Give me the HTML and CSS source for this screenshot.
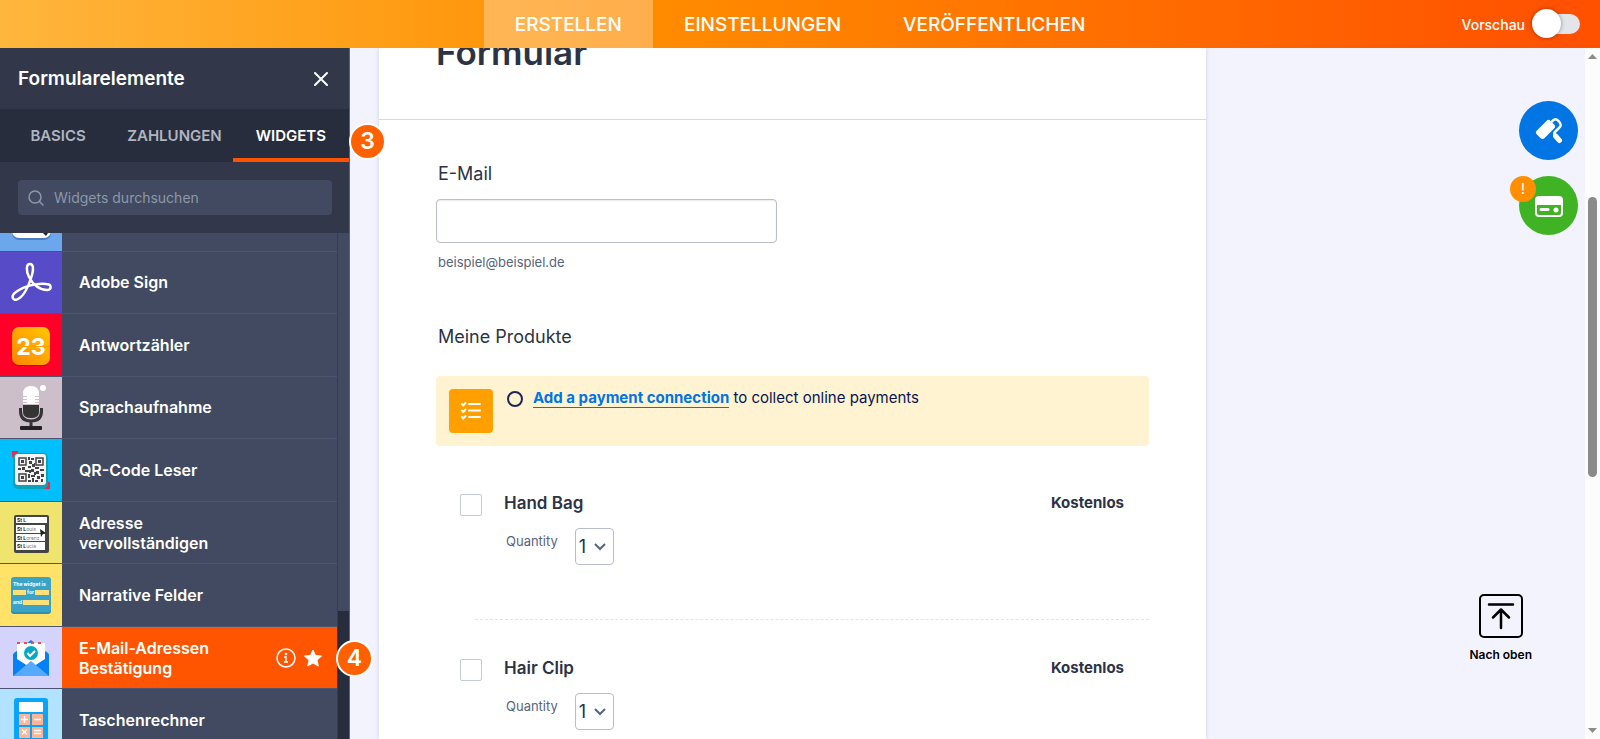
FILE: index.html
```html
<!DOCTYPE html>
<html lang="de">
<head>
  <meta charset="UTF-8" />
  <meta name="viewport" content="width=device-width, initial-scale=1.0"/>
  <title>Formular erstellen</title>
  <link rel="stylesheet" href="styles.css">
</head>
<body>
  <header class="topbar">
    <nav class="topnav">
      <a href="#" class="active">ERSTELLEN</a>
      <a href="#">EINSTELLUNGEN</a>
      <a href="#">VERÖFFENTLICHEN</a>
    </nav>
    <label class="preview" for="preview">
      Vorschau
      <input type="checkbox" id="preview" class="toggle">
    </label>
  </header>

  <div class="layout">
    <aside class="sidebar">
      <div class="sidebar-head">
        <h2>Formularelemente</h2>
        <button type="button" class="close" aria-label="Schließen">
          <svg width="14" height="14" viewBox="0 0 14 14" fill="none" stroke="#fff" stroke-width="2" stroke-linecap="round"><path d="M1 1l12 12M13 1L1 13"/></svg>
        </button>
      </div>

      <div class="tabs">
        <button type="button">BASICS</button>
        <button type="button">ZAHLUNGEN</button>
        <button type="button" class="active">WIDGETS</button>
      </div>

      <div class="search">
        <label class="search-box" for="search">
          <svg width="16" height="16" viewBox="0 0 16 16" fill="none" stroke="#8d98aa" stroke-width="1.5" stroke-linecap="round"><circle cx="7" cy="7" r="6"/><path d="M11.5 11.5L15 15"/></svg>
          <input type="text" id="search" placeholder="Widgets durchsuchen">
        </label>
      </div>

      <div class="widgets">
        <ul class="widget-list">
          <li>
            <span class="icon blue">
              <svg width="62" height="62" viewBox="0 0 62 62"><rect x="12" y="12" width="39" height="39" rx="7" fill="#4a7fc4"/><rect x="12" y="11" width="39" height="38" rx="7" fill="#fff"/><path d="M43 44l5 0-2 3z" fill="#222"/></svg>
            </span>
            <span class="name"></span>
          </li>
          <li>
            <span class="icon violet">
              <svg width="62" height="62" viewBox="0 0 62 62" fill="none" stroke="#fff" stroke-width="2.5" stroke-linejoin="round"><path d="M30 13C26 13 26 20 29 26C33 34 40 39 47 39C52 39 52 33 46 33C37 32 24 35 16 41C10 45 13 51 18 48C24 45 29 34 32 24C34 17 33 13 30 13Z"/></svg>
            </span>
            <span class="name">Adobe Sign</span>
          </li>
          <li>
            <span class="icon red">
              <svg width="62" height="62" viewBox="0 0 62 62">
                <defs><linearGradient id="counter" x1="0" y1="1" x2="1" y2="0"><stop offset="0" stop-color="#ff8400"/><stop offset="1" stop-color="#ffc800"/></linearGradient></defs>
                <rect x="12" y="14" width="38" height="38" rx="7" fill="#c80026"/>
                <rect x="12" y="13" width="38" height="38" rx="7" fill="url(#counter)"/>
                <text x="31" y="41" class="count">23</text>
                <path d="M12 32.5h38" stroke="#ff9e00"/>
              </svg>
            </span>
            <span class="name">Antwortzähler</span>
          </li>
          <li>
            <span class="icon mauve">
              <svg width="62" height="62" viewBox="0 0 62 62">
                <circle cx="43" cy="12" r="3" fill="#fff"/>
                <path d="M23 18q0-8 8-8t8 8v10H23z" fill="#fff"/>
                <path d="M23 20.5h4M23 23.5h4M23 26.5h4M35 20.5h4M35 23.5h4M35 26.5h4" stroke="#ccbfca"/>
                <path d="M23 29h16v7q0 6-8 6t-8-6z" fill="#343434"/>
                <path d="M20.5 32v3q0 10 10.5 10t10.5-10v-3M31 45v8" fill="none" stroke="#343434" stroke-width="3"/>
                <rect x="20" y="50" width="22" height="4" rx="1" fill="#222"/>
              </svg>
            </span>
            <span class="name">Sprachaufnahme</span>
          </li>
          <li>
            <span class="icon cyan">
              <svg width="62" height="62" viewBox="0 0 62 62">
                <path d="M12 12h6v3h-3v3h-3zM50 50h-6v-3h3v-4h3z" fill="#f5244f"/>
                <rect x="13" y="14" width="35" height="36" rx="5" fill="#08a3b9"/>
                <rect x="15" y="15" width="31" height="31" rx="3" fill="#f4f4f4"/>
                <g fill="none" stroke="#444" stroke-width="1.5"><rect x="19" y="19" width="7" height="7"/><rect x="36" y="19" width="7" height="7"/><rect x="19" y="35" width="7" height="7"/></g>
                <path fill="#444" d="M21 21h3v3h-3zM38 21h3v3h-3zM21 37h3v3h-3zM28 18h2v3h-2zM31 19h3v2h-3zM29 22h3v3h-3zM32 25h2v3h-2zM28 27h3v2h-3zM18 29h3v2h-3zM22 28h3v3h-3zM25 31h4v2h-4zM31 30h3v3h-3zM35 28h4v2h-4zM40 30h4v2h-4zM36 32h3v3h-3zM28 35h2v4h-2zM31 36h4v2h-4zM37 37h3v3h-3zM41 35h3v3h-3zM32 39h2v4h-2zM28 41h3v2h-3zM35 41h3v2h-3zM41 40h2v3h-2zM29 31h2v3h-2zM34 24h1v4h-1zM34 33h2v3h-2z"/>
              </svg>
            </span>
            <span class="name">QR-Code Leser</span>
          </li>
          <li>
            <span class="icon khaki">
              <svg width="62" height="62" viewBox="0 0 62 62">
                <rect x="14" y="13" width="35" height="38" rx="2" fill="#444"/>
                <path d="M16 15h31v6H16zM16 23h29v8H16zM16 32h29v7H16zM16 40h29v8H16z" fill="#fff"/>
                <g class="tiny"><text x="17" y="20">St L</text><text x="17" y="29">St L<tspan>ouis</tspan></text><text x="17" y="38">St L<tspan>orenz</tspan></text><text x="17" y="46">St L<tspan>ucia</tspan></text></g>
                <path d="M40 27l6 4-3 1-2 3z" fill="#222"/>
              </svg>
            </span>
            <span class="name">Adresse vervollständigen</span>
          </li>
          <li>
            <span class="icon yellow">
              <svg width="62" height="62" viewBox="0 0 62 62">
                <rect x="11" y="14" width="40" height="36" rx="3" fill="#2f8fb4"/>
                <rect x="11" y="13" width="40" height="35" rx="3" fill="#3ca3c8"/>
                <path d="M13 26h13v5H13zM35 26h14v5H35zM23 36h26v5H23z" fill="#ffe078"/>
                <g class="tiny light"><text x="13" y="22">The widget is</text><text x="27" y="30">for</text><text x="13" y="40">and</text></g>
              </svg>
            </span>
            <span class="name">Narrative Felder</span>
          </li>
          <li class="selected">
            <span class="icon lavender">
              <svg width="62" height="62" viewBox="0 0 62 62">
                <path d="M13 28q0-2 4-4h28q4 2 4 4v21H13z" fill="#0580f5"/>
                <path d="M26 17l5-4 5 4z" fill="#0580f5"/>
                <path d="M17 16h28v16l-14 9-14-9z" fill="#fff"/>
                <path d="M17 16h28" stroke="#f04950" stroke-width="2" stroke-dasharray="3 4"/>
                <path d="M13 49l18-15 18 15z" fill="#55aaff"/>
                <circle cx="31" cy="26" r="7" fill="#08a8c5"/>
                <path d="M27.5 26l2.500 3 5-5" fill="none" stroke="#fff" stroke-width="2"/>
              </svg>
            </span>
            <span class="name">E-Mail-Adressen Bestätigung</span>
            <span class="actions">
              <svg width="20" height="20" viewBox="0 0 20 20" fill="none" stroke="#fff" stroke-width="1.5"><circle cx="10" cy="10" r="9"/><path d="M8 9h2v5M8 14h4"/><circle cx="10" cy="6" r=".6" fill="#fff"/></svg>
              <svg width="20" height="20" viewBox="0 0 20 20"><path fill="#fff" stroke="#fff" stroke-linejoin="round" d="M10 2l2.500 5.500 6 .6-4.500 4 1.300 6L10 15l-5.300 3.100 1.300-6-4.500-4 6-.6z"/></svg>
            </span>
          </li>
          <li>
            <span class="icon sky">
              <svg width="62" height="62" viewBox="0 0 62 62">
                <rect x="14" y="9" width="34" height="50" rx="3" fill="#0aa5fa"/>
                <rect x="19" y="13" width="24" height="10" rx="1" fill="#fff"/>
                <path d="M19 25h11v11H19zM32 25h11v11H32zM19 38h11v11H19zM32 38h11v11H32z" fill="#ffb493"/>
                <path d="M21 30.5h7M24.5 27v7M34 30.5h7M22 40.5l5 5M27 40.5l-5 5M34 41.5h7M34 44.5h7" stroke="#fff" stroke-width="1.5"/>
              </svg>
            </span>
            <span class="name">Taschenrechner</span>
          </li>
        </ul>
        <div class="side-scroll"><span></span></div>
      </div>
      <span class="step step-3">3</span>
      <span class="step step-4">4</span>
    </aside>

    <main class="stage">
      <form class="form-card">
        <div class="form-header"><h1>Formular</h1></div>

        <div class="field">
          <label class="field-label" for="email">E-Mail</label>
          <input type="email" id="email" class="email">
          <span class="hint">beispiel@beispiel.de</span>
        </div>

        <div class="products">
          <span class="field-label">Meine Produkte</span>
          <div class="notice">
            <span class="notice-icon">
              <svg width="22" height="20" viewBox="0 0 22 20" fill="none" stroke="#fff" stroke-width="2" stroke-linecap="round"><path d="M9 3h11M9 9.5h11M9 16h11M2 3l1.200 1.500L5.500 2M2 9.500L3.200 11l2.300-2.500M2 16l1.200 1.500L5.500 15"/></svg>
            </span>
            <span class="ring"></span>
            <p><a href="#">Add a payment connection</a> to collect online payments</p>
          </div>

          <div class="product">
            <input type="checkbox" id="bag">
            <div class="product-info">
              <label class="product-name" for="bag">Hand Bag</label>
              <div class="quantity">
                <label for="bagQty">Quantity</label>
                <span class="select-wrap">
                  <select id="bagQty"><option>1</option><option>2</option></select>
                  <svg width="12" height="8" viewBox="0 0 12 8" fill="none" stroke="#57647e" stroke-width="2"><path d="M1 1l5 5 5-5"/></svg>
                </span>
              </div>
            </div>
            <span class="price">Kostenlos</span>
          </div>

          <div class="product">
            <input type="checkbox" id="clip">
            <div class="product-info">
              <label class="product-name" for="clip">Hair Clip</label>
              <div class="quantity">
                <label for="clipQty">Quantity</label>
                <span class="select-wrap">
                  <select id="clipQty"><option>1</option><option>2</option></select>
                  <svg width="12" height="8" viewBox="0 0 12 8" fill="none" stroke="#57647e" stroke-width="2"><path d="M1 1l5 5 5-5"/></svg>
                </span>
              </div>
            </div>
            <span class="price">Kostenlos</span>
          </div>
        </div>
      </form>

      <div class="tools">
        <div class="tool-buttons">
          <button type="button" class="round designer" aria-label="Designer">
            <svg width="28" height="28" viewBox="0 0 28 28" fill="none" stroke="#fff" stroke-linecap="round" stroke-linejoin="round"><path d="M4 15.500L13.500 6l3.500 3.500L7.500 19z" fill="#fff" stroke-width="6"/><path d="M17 4.500C19 1.500 22 1.500 24 4.500C27 8 26 9 23 12C20 15 18 15.500 20 19" stroke-width="2.500"/><path d="M20.500 19l4 4.500" stroke-width="5"/></svg>
          </button>
          <button type="button" class="round payment" aria-label="Zahlung">
            <svg width="30" height="22" viewBox="0 0 30 22"><rect x="2" y="2" width="26" height="19" rx="3" fill="none" stroke="#fff" stroke-width="2"/><path d="M2 2h26v8H2z" fill="#fff"/><path d="M7 14.500h7" stroke="#fff" stroke-width="3" stroke-linecap="round"/><circle cx="22" cy="15" r="2.500" fill="#fff"/></svg>
            <span class="alert">!</span>
          </button>
        </div>
        <button type="button" class="to-top">
          <svg width="44" height="44" viewBox="0 0 44 44" fill="none" stroke="#000" stroke-width="2" stroke-linecap="round" stroke-linejoin="round"><rect x="1" y="1" width="42" height="42" rx="4"/><path d="M10 10.500h24M22 34V15.500M14 23.500l8-8 8 8" stroke-width="2.500"/></svg>
          Nach oben
        </button>
      </div>
    </main>

    <div class="page-scroll">
      <svg width="9" height="5" viewBox="0 0 9 5"><path d="M0 5l4.500-5L9 5z" fill="#8b8b8b"/></svg>
      <span></span>
      <svg width="9" height="5" viewBox="0 0 9 5"><path d="M0 0l4.500 5L9 0z" fill="#8b8b8b"/></svg>
    </div>
  </div>
</body>
</html>
```
FILE: styles.css
```css
* { box-sizing: border-box; }
body {
  margin: 0;
  height: 100vh;
  display: flex;
  flex-direction: column;
  overflow: hidden;
  font-family: Inter, "Liberation Sans", sans-serif;
  color: #2c3345;
}
button {
  font-family: inherit;
  border: none;
  background: transparent;
  padding: 0;
  cursor: pointer;
}
svg { display: block; flex: none; }
h1, h2, p, ul { margin: 0; padding: 0; }

/* top bar */
.topbar {
  position: relative;
  z-index: 2;
  display: grid;
  grid-template-columns: 1fr auto 1fr;
  height: 48px;
  flex: none;
  background: linear-gradient(90deg, #ffb63d, #ff8f00 38%, #ff5100 98%);
  color: #fff;
}
.topnav {
  grid-column: 2;
  display: flex;
}
.topnav a {
  display: flex;
  align-items: center;
  padding: 0 31px;
  color: #fff;
  font-size: 19px;
  font-weight: 500;
  text-decoration: none;
}
.topnav a.active { background: rgba(255,255,255,0.3); }
.preview {
  justify-self: end;
  display: flex;
  align-items: center;
  gap: 8px;
  padding-right: 20px;
  font-size: 14px;
  font-weight: 500;
}
.toggle {
  appearance: none;
  position: relative;
  width: 47px;
  height: 20px;
  margin: 0;
  border-radius: 10px;
  background: #e3e5eb;
}
.toggle::before {
  content: "";
  position: absolute;
  left: -1px;
  top: -5px;
  width: 29px;
  height: 29px;
  border-radius: 50%;
  background: #fff;
  box-shadow: 0 0 4px rgba(0,0,0,0.4);
}

.layout {
  flex: 1;
  min-height: 0;
  display: flex;
}

/* sidebar */
.sidebar {
  position: relative;
  z-index: 1;
  width: 350px;
  flex: none;
  display: flex;
  flex-direction: column;
  background: #323849;
  border-right: 1px solid #5a6379;
}
.sidebar-head {
  display: flex;
  align-items: center;
  justify-content: space-between;
  height: 61px;
  flex: none;
  padding: 0 21px 0 18px;
  color: #fff;
}
.sidebar-head h2 {
  font-size: 19px;
  font-weight: 600;
}
.tabs {
  display: flex;
  height: 53px;
  flex: none;
  background: #272d3d;
}
.tabs button {
  flex: 1;
  padding-top: 4px;
  border-bottom: 4px solid transparent;
  color: #b1b5c0;
  font-size: 15px;
  font-weight: 600;
}
.tabs button.active {
  color: #fff;
  border-color: #ff5100;
}
.search { padding: 18px 17px 18px 18px; }
.search-box {
  display: flex;
  align-items: center;
  gap: 10px;
  height: 35px;
  padding: 0 10px;
  border-radius: 4px;
  background: #414a60;
}
.search-box input {
  flex: 1;
  min-width: 0;
  padding: 0;
  border: none;
  outline: none;
  background: transparent;
  color: #fff;
  font: 14px Inter, "Liberation Sans", sans-serif;
}
.search-box input::placeholder { color: #8d98aa; }

.widgets {
  flex: 1;
  min-height: 0;
  display: flex;
  overflow: hidden;
  background: #414a60;
}
.widget-list {
  flex: 1;
  display: grid;
  grid-auto-rows: 1fr;
  height: 563px;
  margin-top: -44px;
  list-style: none;
}
.widget-list li {
  display: flex;
  align-items: center;
  min-height: 0;
  overflow: hidden;
  border-bottom: 1px solid #4c5670;
  color: #fff;
  font-size: 16px;
  line-height: 20px;
  font-weight: 600;
}
.widget-list li.selected { background: #ff5400; }
.icon {
  width: 62px;
  height: 62px;
  flex: none;
}
.blue { background: #6ca6ec; }
.violet { background: #574bc8; }
.red { background: #ff0028; }
.mauve { background: #ccbfca; }
.cyan { background: #00bfff; }
.khaki { background: #efe56e; }
.yellow { background: #ffe267; }
.lavender { background: #d3d3fb; }
.sky { background: #b1e2ff; }
.count {
  fill: #fff;
  font-size: 23px;
  font-weight: 700;
  text-anchor: middle;
}
.tiny {
  font-size: 5px;
  font-weight: 700;
  fill: #222;
}
.tiny tspan { font-weight: 400; fill: #777; }
.tiny.light { fill: #fff; }
.name {
  max-width: 170px;
  margin-right: auto;
  padding-left: 17px;
}
.actions {
  display: flex;
  gap: 7px;
  padding-right: 14px;
}
.side-scroll {
  width: 12px;
  flex: none;
  border-left: 1px solid #363e52;
}
.side-scroll span {
  display: block;
  height: 130px;
  margin-top: 378px;
  background: #272d3d;
}

.step {
  position: absolute;
  width: 37px;
  height: 37px;
  border: 2px solid #fff;
  border-radius: 50%;
  background: #ff6100;
  color: #fff;
  font-size: 23px;
  font-weight: 600;
  line-height: 33px;
  text-align: center;
}
.step-3 { left: 349px; top: 75px; }
.step-4 { left: 336px; top: 592px; }

/* form */
.stage {
  flex: 1;
  min-width: 0;
  display: flex;
  overflow: hidden;
  background: #f3f3fe;
}
.form-card {
  flex: 1;
  margin-left: 29px;
  background: #fff;
  box-shadow: 0 0 4px rgba(84,95,160,0.25);
}
.form-header {
  display: flex;
  align-items: flex-end;
  height: 72px;
  padding: 0 57px 47px;
  border-bottom: 1px solid #d7d8e1;
}
.form-header h1 {
  font-size: 35px;
  line-height: 40px;
  font-weight: 600;
}
.field, .products { padding: 0 57px; }
.field-label {
  display: block;
  padding-left: 2px;
  font-size: 18px;
  line-height: 24px;
  font-weight: 400;
}
.field { padding-top: 42px; }
.email {
  display: block;
  width: 341px;
  height: 44px;
  margin: 13px 0 11px;
  padding: 0 10px;
  border: 1px solid #b8bdc9;
  border-radius: 4px;
  background: #fff;
  box-shadow: inset 0 1px 2px rgba(44,51,69,0.1);
  font: 16px Inter, sans-serif;
}
.hint {
  display: block;
  padding-left: 2px;
  color: #57647e;
  font-size: 13px;
  line-height: 16px;
}
.products { padding-top: 55px; }
.notice {
  display: flex;
  align-items: flex-start;
  height: 70px;
  margin: 27px 0 36px;
  padding: 13px;
  border-radius: 4px;
  background: #fff3d2;
  color: #0a1551;
  font-size: 15px;
  line-height: 18px;
}
.notice-icon {
  display: flex;
  align-items: center;
  justify-content: center;
  width: 44px;
  height: 44px;
  margin-right: 14px;
  border-radius: 4px;
  background: #ffa000;
}
.ring {
  width: 16px;
  height: 16px;
  margin: 2px 10px 0 0;
  border: 2px solid #1c2757;
  border-radius: 50%;
}
.notice a {
  color: #0075e3;
  font-weight: 700;
  text-decoration: none;
  border-bottom: 1px solid #0075e3;
}

.product {
  display: flex;
  align-items: flex-start;
  height: 165px;
  padding: 10px 25px 0 24px;
}
.product + .product {
  position: relative;
}
.product + .product::before {
  content: "";
  position: absolute;
  left: 39px;
  right: 0;
  top: -28px;
  border-top: 1px dashed #e3e5e9;
}
.product input {
  appearance: none;
  width: 22px;
  height: 22px;
  margin: 2px 22px 0 0;
  border: 1px solid #c3cad8;
  border-radius: 2px;
  background: #fff;
}
.product-info { flex: 1; }
.product-name {
  display: block;
  margin-bottom: 14px;
  font-size: 17px;
  line-height: 22px;
  font-weight: 600;
}
.quantity {
  display: flex;
  gap: 17px;
  padding-left: 2px;
  color: #57647e;
  font-size: 13px;
  line-height: 26px;
}
.select-wrap {
  position: relative;
  width: 39px;
  height: 37px;
}
.select-wrap select {
  appearance: none;
  width: 100%;
  height: 100%;
  padding: 0 3px;
  border: 1px solid #b8bdc9;
  border-radius: 4px;
  background: #fff;
  color: #2c3345;
  font: 18px Inter, sans-serif;
}
.select-wrap svg {
  position: absolute;
  right: 8px;
  top: 15px;
  pointer-events: none;
}
.price {
  font-size: 15px;
  line-height: 22px;
  font-weight: 700;
}

/* right side */
.tools {
  width: 379px;
  flex: none;
  display: flex;
  flex-direction: column;
  justify-content: space-between;
  align-items: flex-end;
  padding: 53px 7px 77px;
}
.tool-buttons {
  display: flex;
  flex-direction: column;
  gap: 16px;
}
.round {
  position: relative;
  display: flex;
  align-items: center;
  justify-content: center;
  width: 59px;
  height: 59px;
  border-radius: 50%;
}
.designer { background: #0075e3; }
.payment { background: #3fb323; }
.alert {
  position: absolute;
  left: -9px;
  top: 0;
  width: 26px;
  height: 26px;
  border-radius: 50%;
  background: #ff8f00;
  color: #fff;
  font-size: 15px;
  line-height: 26px;
}
.to-top {
  display: flex;
  flex-direction: column;
  align-items: center;
  gap: 10px;
  margin-right: 46px;
  color: #000;
  font-size: 12px;
  line-height: 14px;
  font-weight: 600;
}

.page-scroll {
  width: 15px;
  flex: none;
  display: flex;
  flex-direction: column;
  align-items: center;
  padding: 6px 0;
  background: #fcfcfc;
}
.page-scroll span {
  width: 9px;
  height: 280px;
  margin: 138px 0 auto;
  border-radius: 5px;
  background: #8b8b8b;
}
```
